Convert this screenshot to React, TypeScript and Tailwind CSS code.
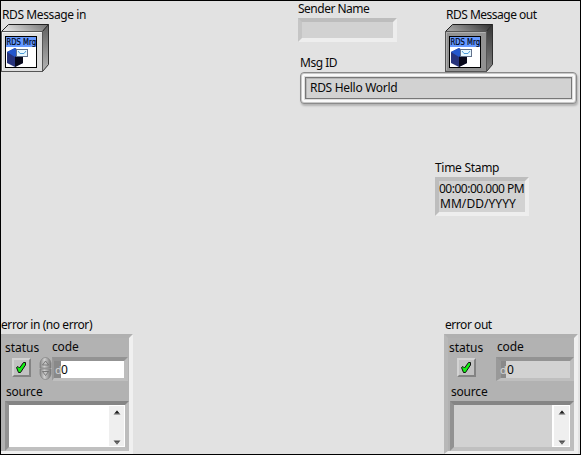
import type { ReactNode } from "react";

function Label({ children, className = "" }: { children: ReactNode; className?: string }) {
  return <div className={`h-4 w-max whitespace-nowrap leading-4 ${className}`}>{children}</div>;
}

function MessageIcon({ dark = false }: { dark?: boolean }) {
  const id = dark ? "out" : "in";
  const face = dark ? "#929292" : "#dedede";
  const edge = dark ? "#b0b0b0" : "#f4f4f4";
  return (
    <svg className="block shrink-0" width="48" height="48" viewBox="0 0 48 48">
      <defs>
        <linearGradient id={`top-${id}`} x1="0" x2="1" y1="0.2" y2="0">
          <stop offset="0" stopColor={dark ? "#a0a0a0" : "#e0e0e0"} />
          <stop offset="1" stopColor={dark ? "#303030" : "#707070"} />
        </linearGradient>
        <linearGradient id={`side-${id}`} x1="0" x2="0" y1="0" y2="1">
          <stop offset="0" stopColor={dark ? "#353535" : "#606060"} />
          <stop offset="1" stopColor={dark ? "#808080" : "#b5b5b5"} />
        </linearGradient>
      </defs>
      <path d="M0.5 7.5L7.5 0.5H47.5L41.5 7.5Z" fill={`url(#top-${id})`} stroke="#202020" />
      <path d="M41.5 7.5L47.5 0.5V40.5L41.5 47.5Z" fill={`url(#side-${id})`} stroke="#303030" />
      <rect x="0.5" y="7.5" width="41" height="40" fill={face} stroke="#555" />
      <path d="M1.5 46V8.5H40.5" fill="none" stroke={edge} />
      <rect x="4.5" y="12.5" width="31" height="31" fill="#fff" stroke="#000" />
      <rect x="5" y="13" width="30" height="10" fill="#6699ff" />
      <text x="5.5" y="21" fontSize="8" fontFamily="DejaVu Sans, sans-serif" fill="#000820" stroke="#000820" strokeWidth="0.2" textLength="29.5" lengthAdjust="spacingAndGlyphs">RDS Mrg</text>
      <path d="M6 28L14 24L22 29V39L14 43L6 39Z" fill="#27337c" />
      <path d="M6 28L14 24L18 30L14 33Z" fill="#2457cc" />
      <path d="M14 33L22 29V39L14 43Z" fill="#08091a" />
      <rect x="15.5" y="25.5" width="11" height="7" fill="#e8f8ff" stroke="#62718b" shapeRendering="crispEdges" />
      <path d="M17 27L19 29.5H23L25 27" fill="none" stroke="#4c9bd8" />
    </svg>
  );
}

function CheckLamp() {
  return (
    <div className="h-[19px] w-[19px] shrink-0 border-2 border-t-[#d3d3d3] border-r-[#838383] border-b-[#838383] border-l-[#d3d3d3] bg-[#c2c2c2]">
      <svg className="block" width="15" height="15" viewBox="0 0 15 15">
        <path d="M2.5 7.5L4 6.5L5.5 8L9.5 2.5H11.5V5L6.5 12.5H4.5Z" fill="#12f012" stroke="#101010" strokeLinejoin="round" />
      </svg>
    </div>
  );
}

function Spinner() {
  return (
    <svg className="block shrink-0" width="13" height="24" viewBox="0 0 13 24">
      <defs>
        <linearGradient id="knob">
          <stop offset="0" stopColor="#858585" />
          <stop offset="0.4" stopColor="#d0d0d0" />
          <stop offset="1" stopColor="#777" />
        </linearGradient>
      </defs>
      <path d="M1 11V6Q2 1 6.5 0.5Q11 1 12 6V11ZM1 12V17Q2 22 6.5 22.5Q11 22 12 17V12Z" fill="url(#knob)" stroke="#808080" strokeWidth="0.7" />
      <path d="M3.5 8L6.5 4L9.5 8ZM3.5 14.5H9.5L6.5 18.5Z" fill="#c2c2c2" stroke="#686868" strokeWidth="0.8" />
    </svg>
  );
}

function NumberField({ input = false }: { input?: boolean }) {
  return (
    <div className={`flex h-6 border-t-4 border-r-4 border-b-[3px] border-t-[#939393] border-r-[#bdbdbd] border-b-[#bfbfbf] ${input ? "w-[76px] border-l-[2px] border-l-[#999] bg-white" : "w-[78px] border-l-[5px] border-l-[#999] bg-[#d2d2d2]"}`}>
      <div className={`h-full bg-[#898989] text-[11px] leading-[17px] text-[#d6d6d6] ${input ? "w-[7px]" : "w-[5px]"}`}><span className={input ? "ml-px" : "-ml-px"}>d</span></div>
      <div className={`leading-[17px] ${input ? "" : "ml-px"}`}>0</div>
    </div>
  );
}

function ScrollBar() {
  return (
    <div className="flex h-full w-[18px] flex-col items-center justify-between border border-l-2 border-[#fff] bg-[#efefef] pt-[4px] pb-px">
      <svg width="8" height="5" viewBox="0 0 8 5"><path d="M0.5 4.5L4 0.5L7.5 4.5Z" fill="#606060" /><path d="M2 3L4 .5L6 3Z" fill="#202020" /></svg>
      <svg width="8" height="5" viewBox="0 0 8 5"><path d="M0.5 0.5H7.5L4 4.5Z" fill="#505050" /><path d="M2 2H6L4 4.5Z" fill="#707070" /></svg>
    </div>
  );
}

function ErrorCluster({ input = false }: { input?: boolean }) {
  return (
    <div className={`mt-px flex h-[120px] flex-col border-t-4 border-r-4 border-b-[3px] border-t-[#b0b0b0] border-r-[#f0f0f0] border-b-[#f0f0f0] bg-[#b2b2b2] ${input ? "w-[132px] pl-1" : "w-[134px] border-l-4 border-l-[#b8b8b8]"}`}>
      <div className={`flex ${input ? "" : "pl-[1px]"}`}>
        <div className={input ? "w-[34px]" : "w-[47px]"}>
          <Label className="mt-[2px] tracking-[-0.02px]">status</Label>
          <div className={`mt-[2px] ${input ? "ml-[7px]" : "ml-[8px]"}`}><CheckLamp /></div>
        </div>
        <div>
          <Label className={`mt-[1px] tracking-[-0.15px] ${input ? "ml-[13px]" : "ml-[1px]"}`}>code</Label>
          <div className="mt-[2px] flex">{input && <Spinner />}<NumberField input={input} /></div>
        </div>
      </div>
      <Label className={`mt-[3px] tracking-[-0.2px] ${input ? "ml-[1px]" : "ml-[3px]"}`}>source</Label>
      <div className={`mt-px flex h-[50px] w-[124px] justify-end border-4 border-t-[#858585] border-r-[#bdbdbd] border-b-[#c0c0c0] border-l-[#929292] ${input ? "bg-white" : "ml-[2px] bg-[#d2d2d2]"}`}><ScrollBar /></div>
    </div>
  );
}

export default function App() {
  return (
    <main className="flex h-[455px] w-[581px] flex-col overflow-hidden border border-black bg-[#e2e2e2] font-['Noto_Sans',sans-serif] text-[12px] text-[#090909]">
      <div className="flex h-[316px]">
        <section className="w-[297px] pt-[6px]">
          <Label className="ml-px tracking-[-0.4px]">RDS Message in</Label>
          <div className="mt-px"><MessageIcon /></div>
        </section>
        <section>
          <div className="flex h-[71px]">
            <div className="w-[147px]">
              <Label className="tracking-[-0.5px]">Sender Name</Label>
              <div className="mt-px h-6 w-[99px] border-4 border-t-[#bdbdbd] border-r-[#ededed] border-b-[#eee] border-l-[#c5c5c5] bg-[#d2d2d2]" />
              <Label className="mt-[13px] ml-[2px] tracking-[-0.5px]">Msg ID</Label>
            </div>
            <div className="pt-[6px]">
              <Label className="ml-px tracking-[-0.5px]">RDS Message out</Label>
              <div className="mt-px"><MessageIcon dark /></div>
            </div>
          </div>
          <div className="relative ml-[2px] h-8 w-[277px] rounded-[4px] border border-[#8b8b8b] bg-[#dedede] p-[4px] shadow-[inset_0_0_0_1px_#c8c8c8,inset_0_0_0_3px_#fafafa,1px_2px_2px_#b4b4b4]">
            <div className="h-[22px] w-[267px] border border-[#777] bg-[#d2d2d2] pl-[4px] leading-[20px] tracking-[-0.3px] shadow-[inset_1px_1px_0_#b5b5b5]">RDS Hello World</div>
          </div>
          <div className="mt-[56px] ml-[137px]">
            <Label className="tracking-[-0.3px]">Time Stamp</Label>
            <div className="mt-px h-[39px] w-[94px] overflow-hidden border-4 border-t-[#bdbdbd] border-r-[#ededed] border-b-[#eee] border-l-[#bdbdbd] bg-[#d2d2d2] leading-[15px] whitespace-nowrap">
              <div className="tracking-[-0.5px]">00:00:00.000 PM</div>
              <div className="ml-px tracking-[0.05px]">MM/DD/YYYY</div>
            </div>
          </div>
        </section>
      </div>
      <div className="flex">
        <section className="w-[443px]">
          <Label className="tracking-[-0.42px]">error in (no error)</Label>
          <ErrorCluster input />
        </section>
        <section>
          <Label className="ml-px tracking-[-0.45px]">error out</Label>
          <ErrorCluster />
        </section>
      </div>
    </main>
  );
}
